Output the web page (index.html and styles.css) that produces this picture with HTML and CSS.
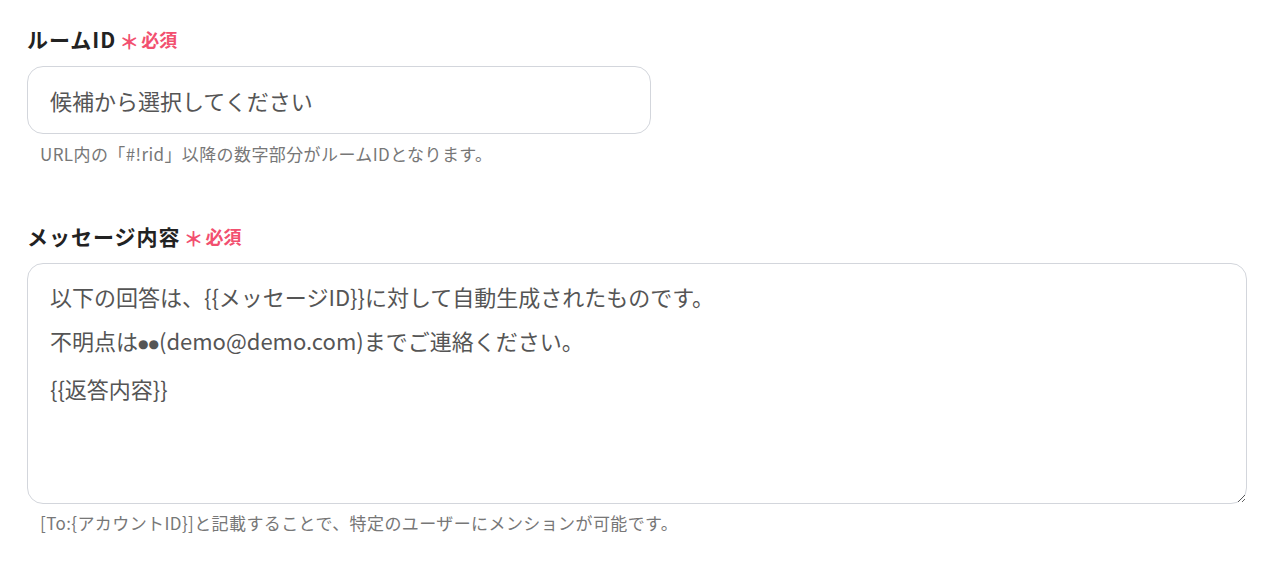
FILE: index.html
```html
<!DOCTYPE html>
<html lang="ja">
<head>
<meta charset="utf-8">
<link rel="stylesheet" href="styles.css">
</head>
<body>
<div class="form">
  <div class="field field-room">
    <div class="label">ルームID<span class="req"><span class="ast">＊</span>必須</span></div>
    <div class="input"><span class="placeholder">候補から選択してください</span></div>
    <div class="help">URL内の「#!rid」以降の数字部分がルームIDとなります。</div>
  </div>
  <div class="field field-msg">
    <div class="label">メッセージ内容<span class="req"><span class="ast">＊</span>必須</span></div>
    <div class="textarea" role="textbox" aria-multiline="true">
      <div class="line">以下の回答は、{{メッセージID}}に対して自動生成されたものです。</div>
      <div class="line">不明点は<span class="dot">●●</span>(demo@demo.com)までご連絡ください。</div>
      <div class="line">{{返答内容}}</div>
    </div>
    <div class="help">[To:{アカウントID}]と記載することで、特定のユーザーにメンションが可能です。</div>
  </div>
</div>
</body>
</html>
```
FILE: styles.css
```css
* { box-sizing: border-box; }
html, body { margin: 0; padding: 0; background: #fff; }
body {
  font-family: "Noto Sans CJK JP", "Noto Sans", sans-serif;
  color: #222;
}
.form {
  padding: 25px 0 0 27px;
  width: 1247px;
}
.field { display: flex; flex-direction: column; }
.field-msg { margin-top: 58px; }
.label {
  font-size: 21px;
  font-weight: 700;
  line-height: 28px;
  height: 28px;
  color: #222;
  display: flex;
  align-items: center;
  letter-spacing: 1px;
}
.req {
  color: #f2506f;
  font-size: 18px;
  font-weight: 700;
  margin-left: 3px;
  display: inline-flex;
  align-items: center;
  letter-spacing: 0;
}
.ast { font-size: 20px; margin-right: 2px; position: relative; top: 3px; }
.input {
  margin-top: 13px;
  width: 624px;
  height: 68px;
  border: 1px solid #d3d6dc;
  border-radius: 16px;
  display: flex;
  align-items: center;
  padding-left: 22px;
}
.placeholder { font-size: 22px; color: #555; }
.help {
  margin-top: 10px;
  margin-left: 13px;
  font-size: 17px;
  line-height: 20px;
  color: #777;
  letter-spacing: 0.4px;
}
.textarea {
  margin-top: 13px;
  width: 1220px;
  height: 241px;
  border: 1px solid #d3d6dc;
  border-radius: 16px;
  padding: 10px 22px;
  font-size: 22px;
  line-height: 44px;
  color: #555;
  resize: vertical;
  overflow: auto;
}
.line { white-space: pre-wrap; }
.dot {
  font-family: "DejaVu Sans", sans-serif;
  font-size: 12px;
  letter-spacing: 0;
  vertical-align: 2px;
}
.field-msg .help { margin-top: 9px; }
```
